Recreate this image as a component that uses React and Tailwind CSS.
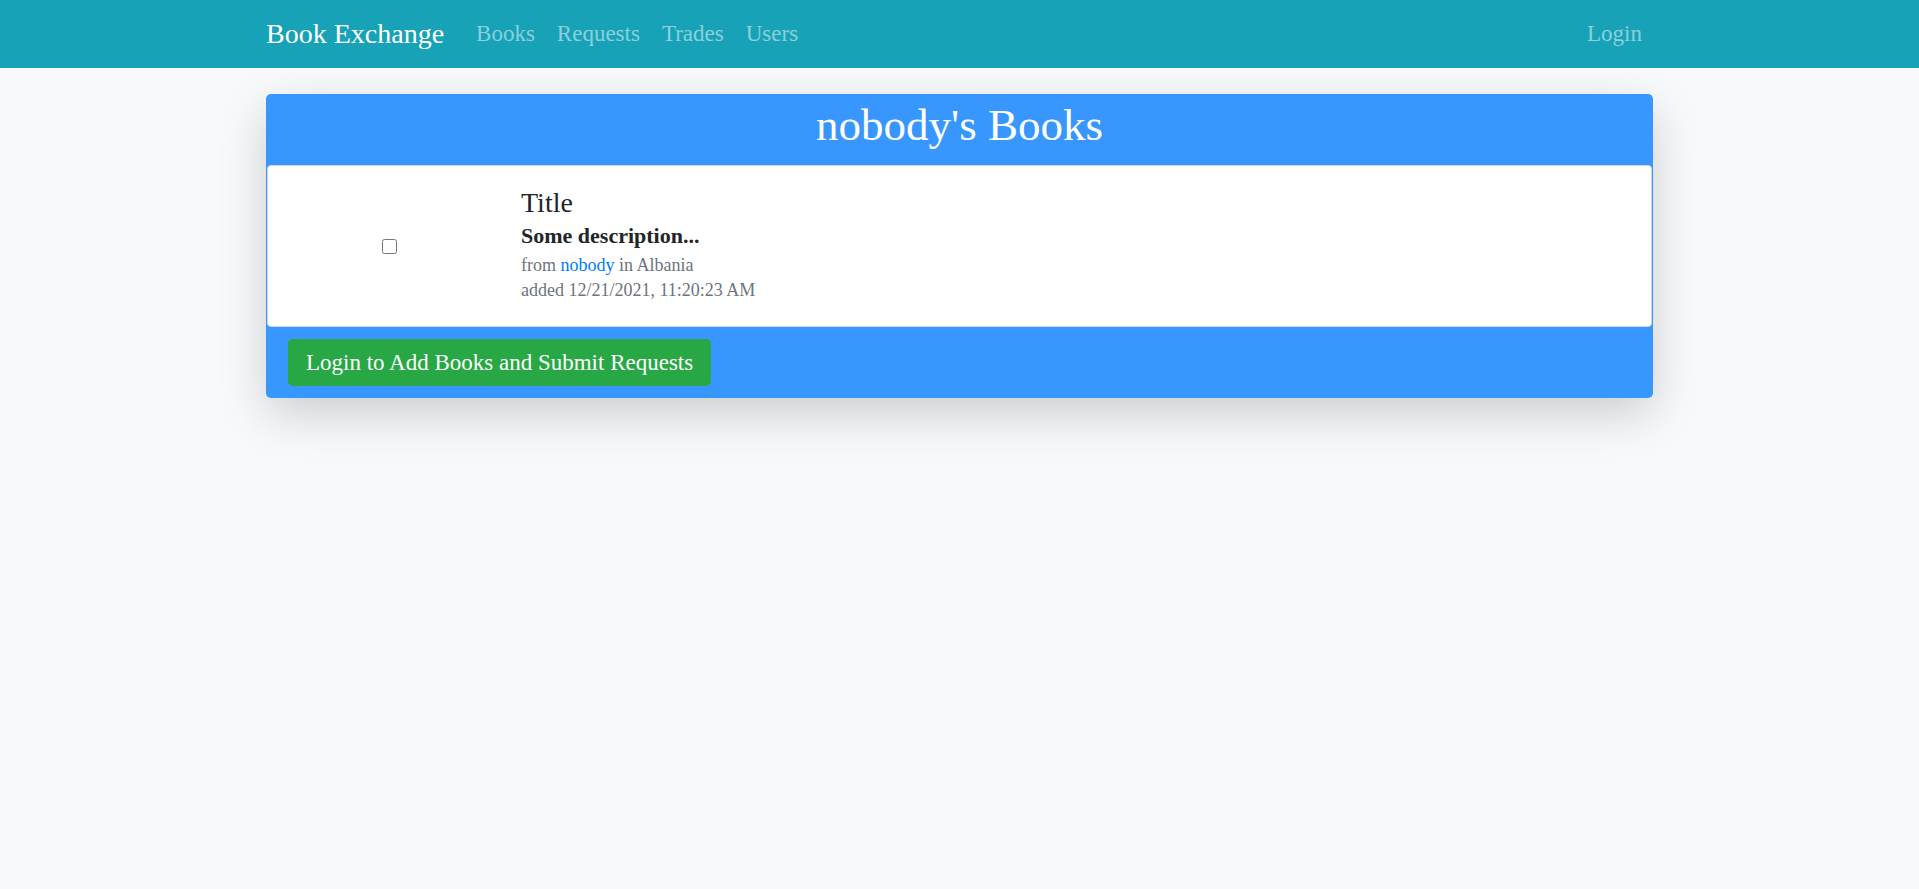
import React from "react";

export default function App() {
  return (
    <div className="min-h-[889px] bg-[#f8f9fa] font-['Liberation_Serif',serif] text-[#212529]">
      <nav className="h-[68px] bg-[#17a2b8]">
        <div className="mx-auto flex h-full w-[1387px] items-center">
          <a className="mr-[21px] text-[28px] leading-[38px] text-white" href="#">
            Book Exchange
          </a>
          <div className="flex items-center">
            {["Books", "Requests", "Trades", "Users"].map((l) => (
              <a
                key={l}
                href="#"
                className="px-[11px] text-[23px] leading-[34px] text-white/50"
              >
                {l}
              </a>
            ))}
          </div>
          <div className="ml-auto">
            <a href="#" className="px-[11px] text-[23px] leading-[34px] text-white/50">
              Login
            </a>
          </div>
        </div>
      </nav>

      <div className="mx-auto mt-[26px] w-[1387px] overflow-hidden rounded-[5px] bg-[#3797ff] shadow-[0_16px_48px_rgba(0,0,0,0.175)]">
        <h1 className="pt-[9px] pb-[17px] text-center text-[45px] leading-[45px] text-white">
          nobody's Books
        </h1>
        <div className="mx-[1px] flex rounded-[4px] border border-[#d4d8dc] bg-white">
          <div className="flex w-[242px] items-center justify-center">
            <input type="checkbox" className="m-0 h-[15px] w-[15px]" />
          </div>
          <div className="pl-[11px] pt-[20px] pb-[26px]">
            <div className="text-[28px] leading-[34px] text-[#212529]">Title</div>
            <div className="mt-[3px] text-[22px] font-bold leading-[26px] text-[#212529]">
              Some description...
            </div>
            <div className="mt-[6px] text-[18px] leading-[20px] text-[#6c757d]">
              from{" "}
              <a href="#" className="text-[#007bff]">
                nobody
              </a>{" "}
              in Albania
            </div>
            <div className="mt-[5px] text-[18px] leading-[20px] text-[#6c757d]">
              added 12/21/2021, 11:20:23 AM
            </div>
          </div>
        </div>
        <div className="px-[22px] py-[12px]">
          <button className="rounded-[5px] border border-[#28a745] bg-[#28a745] px-[17px] py-[5px] text-[23px] leading-[35px] text-white">
            Login to Add Books and Submit Requests
          </button>
        </div>
      </div>
    </div>
  );
}
